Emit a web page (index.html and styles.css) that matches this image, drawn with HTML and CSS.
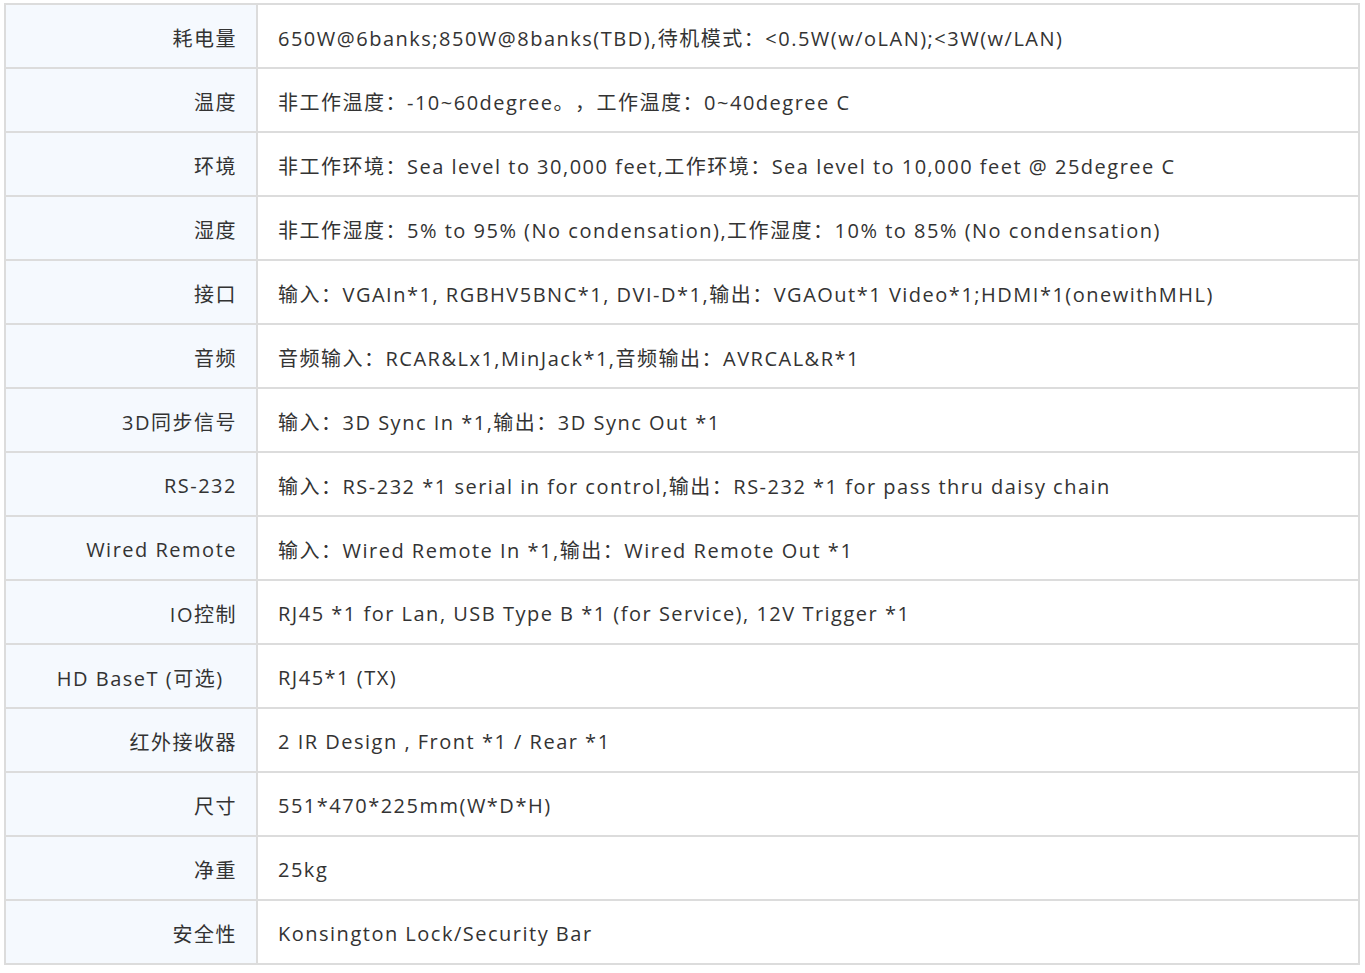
FILE: index.html
```html
<!DOCTYPE html>
<html lang="zh-CN">
<head>
<meta charset="utf-8">
<title>规格参数</title>
<link rel="stylesheet" href="styles.css">
</head>
<body>
<table class="spec">
  <colgroup><col class="col-label"><col class="col-value"></colgroup>
  <tbody>
    <tr><th>耗电量</th><td>650W@6banks;850W@8banks(TBD),待机模式：&lt;0.5W(w/oLAN);&lt;3W(w/LAN)</td></tr>
    <tr><th>温度</th><td>非工作温度：-10~60degree。，工作温度：0~40degree C</td></tr>
    <tr><th>环境</th><td>非工作环境：Sea level to 30,000 feet,工作环境：Sea level to 10,000 feet @ 25degree C</td></tr>
    <tr><th>湿度</th><td>非工作湿度：5% to 95% (No condensation),工作湿度：10% to 85% (No condensation)</td></tr>
    <tr><th>接口</th><td>输入：VGAIn*1, RGBHV5BNC*1, DVI-D*1,输出：VGAOut*1 Video*1;HDMI*1(onewithMHL)</td></tr>
    <tr><th>音频</th><td>音频输入：RCAR&amp;Lx1,MinJack*1,音频输出：AVRCAL&amp;R*1</td></tr>
    <tr><th>3D同步信号</th><td>输入：3D Sync In *1,输出：3D Sync Out *1</td></tr>
    <tr><th>RS-232</th><td>输入：RS-232 *1 serial in for control,输出：RS-232 *1 for pass thru daisy chain</td></tr>
    <tr><th>Wired Remote</th><td>输入：Wired Remote In *1,输出：Wired Remote Out *1</td></tr>
    <tr><th>IO控制</th><td>RJ45 *1 for Lan, USB Type B *1 (for Service), 12V Trigger *1</td></tr>
    <tr><th>HD BaseT (可选)&nbsp;&nbsp;</th><td>RJ45*1 (TX)</td></tr>
    <tr><th>红外接收器</th><td>2 IR Design , Front *1 / Rear *1</td></tr>
    <tr><th>尺寸</th><td>551*470*225mm(W*D*H)</td></tr>
    <tr><th>净重</th><td>25kg</td></tr>
    <tr><th>安全性</th><td>Konsington Lock/Security Bar</td></tr>
  </tbody>
</table>
</body>
</html>
```

FILE: styles.css
```css
html, body {
  margin: 0;
  padding: 0;
  background: #ffffff;
}

body {
  padding: 3px 0 0 4px;
  font-family: "Open Sans", "Noto Sans CJK SC", sans-serif;
  color: #333333;
}

.spec {
  border-collapse: collapse;
  table-layout: fixed;
  width: 1354px;
  border: 2px solid #dcdcdc;
}

.col-label { width: 252px; }
.col-value { width: 1102px; }

.spec tr {
  height: 64px;
}

.spec th,
.spec td {
  border: 2px solid #dcdcdc;
  font-size: 20px;
  letter-spacing: 1.5px;
  text-spacing-trim: space-all;
  font-weight: normal;
  vertical-align: middle;
  white-space: nowrap;
  padding: 3px 20px 0 20px;
}

.spec th {
  background: #f5f9fe;
  text-align: right;
  padding-right: 19px;
}

.spec td {
  text-align: left;
  background: #ffffff;
}
```
